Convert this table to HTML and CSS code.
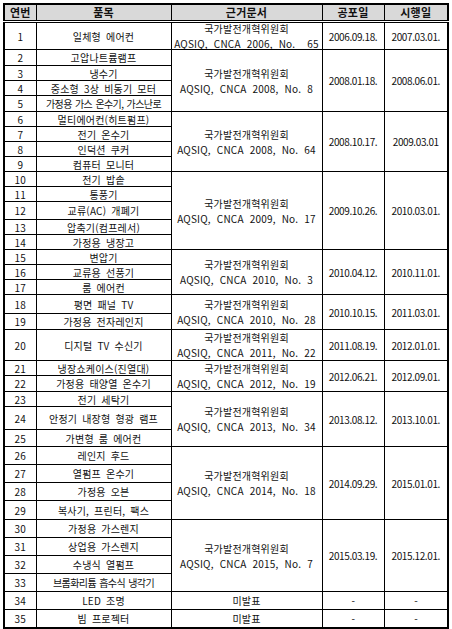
FILE: index.html
```html
<!DOCTYPE html>
<html lang="ko">
<head>
<meta charset="utf-8">
<title>중국 에너지효율 표시 대상 품목</title>
<link rel="stylesheet" href="styles.css">
</head>
<body>
<table class="spec">
  <colgroup>
    <col class="c-no"><col class="c-item"><col class="c-doc"><col class="c-date"><col class="c-date2">
  </colgroup>
  <thead>
    <tr class="hh"><th>연번</th><th>품목</th><th>근거문서</th><th>공포일</th><th>시행일</th></tr>
  </thead>
  <tbody>
    <tr class="h26"><td>1</td><td>일체형 에어컨</td><td class="doc"><div class="two">국가발전개혁위원회<br>AQSIQ, CNCA 2006, No. &nbsp;65</div></td><td class="date">2006.09.18.</td><td class="date">2007.03.01.</td></tr>
    <tr class="h16"><td>2</td><td>고압나트륨램프</td><td class="doc" rowspan="4">국가발전개혁위원회<br>AQSIQ, CNCA 2008, No. 8</td><td class="date" rowspan="4">2008.01.18.</td><td class="date" rowspan="4">2008.06.01.</td></tr>
    <tr class="h15"><td>3</td><td>냉수기</td></tr>
    <tr class="h15"><td>4</td><td>중소형 3상 비동기 모터</td></tr>
    <tr class="h16"><td>5</td><td class="tight">가정용 가스 온수기, 가스난로</td></tr>
    <tr class="h15"><td>6</td><td>멀티에어컨(히트펌프)</td><td class="doc" rowspan="4">국가발전개혁위원회<br>AQSIQ, CNCA 2008, No. 64</td><td class="date" rowspan="4">2008.10.17.</td><td class="date" rowspan="4">2009.03.01</td></tr>
    <tr class="h15"><td>7</td><td>전기 온수기</td></tr>
    <tr class="h15"><td>8</td><td>인덕션 쿠커</td></tr>
    <tr class="h15"><td>9</td><td>컴퓨터 모니터</td></tr>
    <tr class="h15"><td>10</td><td>전기 밥솥</td><td class="doc" rowspan="5">국가발전개혁위원회<br>AQSIQ, CNCA 2009, No. 17</td><td class="date" rowspan="5">2009.10.26.</td><td class="date" rowspan="5">2010.03.01.</td></tr>
    <tr class="h15"><td>11</td><td>통풍기</td></tr>
    <tr class="h18"><td>12</td><td>교류(AC) 개폐기</td></tr>
    <tr class="h15"><td>13</td><td>압축기(컴프레서)</td></tr>
    <tr class="h15"><td>14</td><td>가정용 냉장고</td></tr>
    <tr class="h15"><td>15</td><td>변압기</td><td class="doc" rowspan="3">국가발전개혁위원회<br>AQSIQ, CNCA 2010, No. 3</td><td class="date" rowspan="3">2010.04.12.</td><td class="date" rowspan="3">2010.11.01.</td></tr>
    <tr class="h15"><td>16</td><td>교류용 선풍기</td></tr>
    <tr class="h15"><td>17</td><td>룸 에어컨</td></tr>
    <tr class="h19"><td>18</td><td>평면 패널 TV</td><td class="doc" rowspan="2">국가발전개혁위원회<br>AQSIQ, CNCA 2010, No. 28</td><td class="date" rowspan="2">2010.10.15.</td><td class="date" rowspan="2">2011.03.01.</td></tr>
    <tr class="h16"><td>19</td><td>가정용 전자레인지</td></tr>
    <tr class="h29"><td>20</td><td>디지털 TV 수신기</td><td class="doc">국가발전개혁위원회<br>AQSIQ, CNCA 2011, No. 22</td><td class="date">2011.08.19.</td><td class="date">2012.01.01.</td></tr>
    <tr class="h15"><td>21</td><td>냉장쇼케이스(진열대)</td><td class="doc" rowspan="2">국가발전개혁위원회<br>AQSIQ, CNCA 2012, No. 19</td><td class="date" rowspan="2">2012.06.21.</td><td class="date" rowspan="2">2012.09.01.</td></tr>
    <tr class="h16"><td>22</td><td>가정용 태양열 온수기</td></tr>
    <tr class="h15"><td>23</td><td>전기 세탁기</td><td class="doc" rowspan="3">국가발전개혁위원회<br>AQSIQ, CNCA 2013, No. 34</td><td class="date" rowspan="3">2013.08.12.</td><td class="date" rowspan="3">2013.10.01.</td></tr>
    <tr class="h23"><td>24</td><td>안정기 내장형 형광 램프</td></tr>
    <tr class="h17"><td>25</td><td>가변형 룸 에어컨</td></tr>
    <tr class="h18"><td>26</td><td>레인지 후드</td><td class="doc" rowspan="4">국가발전개혁위원회<br>AQSIQ, CNCA 2014, No. 18</td><td class="date" rowspan="4">2014.09.29.</td><td class="date" rowspan="4">2015.01.01.</td></tr>
    <tr class="h18"><td>27</td><td>열펌프 온수기</td></tr>
    <tr class="h18"><td>28</td><td>가정용 오븐</td></tr>
    <tr class="h19"><td>29</td><td>복사기, 프린터, 팩스</td></tr>
    <tr class="h18"><td>30</td><td>가정용 가스렌지</td><td class="doc" rowspan="4">국가발전개혁위원회<br>AQSIQ, CNCA 2015, No. 7</td><td class="date" rowspan="4">2015.03.19.</td><td class="date" rowspan="4">2015.12.01.</td></tr>
    <tr class="h18"><td>31</td><td>상업용 가스렌지</td></tr>
    <tr class="h18"><td>32</td><td>수냉식 열펌프</td></tr>
    <tr class="h18"><td>33</td><td class="tight">브롬화리튬 흡수식 냉각기</td></tr>
    <tr class="h18"><td>34</td><td>LED 조명</td><td class="doc">미발표</td><td class="date">-</td><td class="date">-</td></tr>
    <tr class="h18"><td>35</td><td>빔 프로젝터</td><td class="doc">미발표</td><td class="date">-</td><td class="date">-</td></tr>
  </tbody>
</table>
</body>
</html>
```
FILE: styles.css
```css
html, body {
  margin: 0;
  padding: 0;
  background: #ffffff;
}

body {
  padding: 3px 0 0 3px;
  font-family: "Noto Sans CJK KR", "Noto Sans", sans-serif;
  color: #111111;
}

.spec {
  border-collapse: collapse;
  table-layout: fixed;
  width: 444px;
  border: 2px solid #000000;
  font-size: 10px;
}

.c-no { width: 32px; }
.c-item { width: 135px; }
.c-doc { width: 151px; }
.c-date { width: 62px; }
.c-date2 { width: 64px; }

.spec th,
.spec td {
  border: 1px solid #000000;
  padding: 0;
  text-align: center;
  vertical-align: middle;
  white-space: nowrap;
  overflow: hidden;
  line-height: 13px;
  word-spacing: 2px;
  letter-spacing: 0.2px;
}

.spec thead th {
  height: 15px;
  line-height: 13px;
  background: #d9d9d9;
  font-weight: bold;
  font-size: 11px;
  border-bottom: 3px double #000000;
}

.spec td.doc {
  line-height: 15px;
  word-spacing: 3px;
}

.spec td.doc .two {
  margin: -2px 0;
}

.spec td.date {
  letter-spacing: -0.4px;
  word-spacing: 0;
}

.spec td.tight {
  letter-spacing: -0.6px;
  word-spacing: 1px;
}

.h15 { height: 15px; }
.h16 { height: 16px; }
.h17 { height: 17px; }
.h18 { height: 18px; }
.h19 { height: 19px; }
.h23 { height: 23px; }
.h26 { height: 26px; }
.h29 { height: 29px; }
```
